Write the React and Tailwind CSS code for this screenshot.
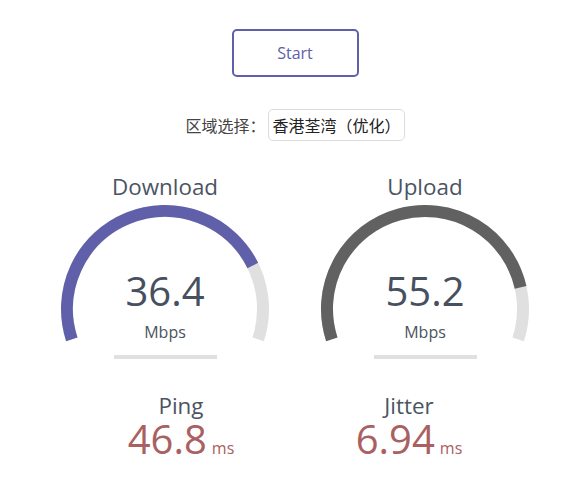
import React from "react";

const CX = 128;
const CY = 139;
const R = 98;

function pt(deg) {
  const a = (deg * Math.PI) / 180;
  return [CX + R * Math.cos(a), CY + R * Math.sin(a)];
}

function arcPath(fromDeg, toDeg) {
  const [x1, y1] = pt(fromDeg);
  const [x2, y2] = pt(toDeg);
  const large = toDeg - fromDeg > 180 ? 1 : 0;
  return `M ${x1.toFixed(2)} ${y1.toFixed(2)} A ${R} ${R} 0 ${large} 1 ${x2.toFixed(2)} ${y2.toFixed(2)}`;
}

function amount(mbps) {
  return 1 - 1 / Math.pow(1.3, Math.sqrt(mbps));
}

function Gauge({ title, value, color }) {
  const start = -198;
  const end = 18;
  const prog = start + amount(parseFloat(value)) * 216;
  return (
    <div className="relative w-[256px] flex flex-col items-center">
      <svg
        className="absolute left-0 top-0"
        width="256"
        height="200"
        viewBox="0 0 256 200"
      >
        <path d={arcPath(start, end)} fill="none" stroke="#E0E0E0" strokeWidth="12" />
        <path d={arcPath(start, prog)} fill="none" stroke={color} strokeWidth="12" />
      </svg>
      <div className="relative mt-[2px] text-[22.4px] leading-[30px] text-[#4a5462]">{title}</div>
      <div className="relative mt-[62px] text-[40px] leading-[54px] text-[#47505e]">{value}</div>
      <div className="relative mt-[3px] text-[16px] leading-[22px] text-[#4a5462]">Mbps</div>
      <div className="relative mt-[12px] w-[103px] h-[4px] bg-[#E0E0E0]" />
    </div>
  );
}

function Small({ title, value }) {
  return (
    <div className="w-[224px] flex flex-col items-center">
      <div className="text-[22.4px] leading-[24px] text-[#4a5462]">{title}</div>
      <div className="mt-[3px] leading-[36px] text-[#AA6060] whitespace-nowrap">
        <span className="text-[40px]">{value}</span>
        <span className="text-[16px] ml-[5px]">ms</span>
      </div>
    </div>
  );
}

export default function App() {
  return (
    <div
      className="w-[580px] h-[488px] bg-white pl-[10px] flex flex-col items-center overflow-hidden"
      style={{ fontFamily: '"Open Sans", "Noto Sans CJK SC", sans-serif' }}
    >
      <div className="mt-[29px] w-[127px] h-[48px] border-2 border-[#6060AA] rounded-[5px] flex items-center justify-center text-[16px] text-[#6060AA]">
        Start
      </div>
      <div className="mt-[32px] h-[32px] flex items-center">
        <span className="text-[16px] text-[#444]" style={{ fontFamily: '"Noto Sans CJK SC", sans-serif' }}>
          区域选择：
        </span>
        <div
          className="ml-[2px] h-[32px] border border-[#dcdcdc] rounded-[5px] pl-[4px] pr-[3px] flex items-center text-[16px] text-[#222]"
          style={{ fontFamily: '"Noto Sans CJK SC", sans-serif' }}
        >
          香港荃湾（优化）
        </div>
      </div>
      <div className="mt-[29px] flex gap-[4px]">
        <Gauge title="Download" value="36.4" color="#6060AA" />
        <Gauge title="Upload" value="55.2" color="#616161" />
      </div>
      <div className="mt-[35px] flex gap-[4px]">
        <Small title="Ping" value="46.8" />
        <Small title="Jitter" value="6.94" />
      </div>
    </div>
  );
}
